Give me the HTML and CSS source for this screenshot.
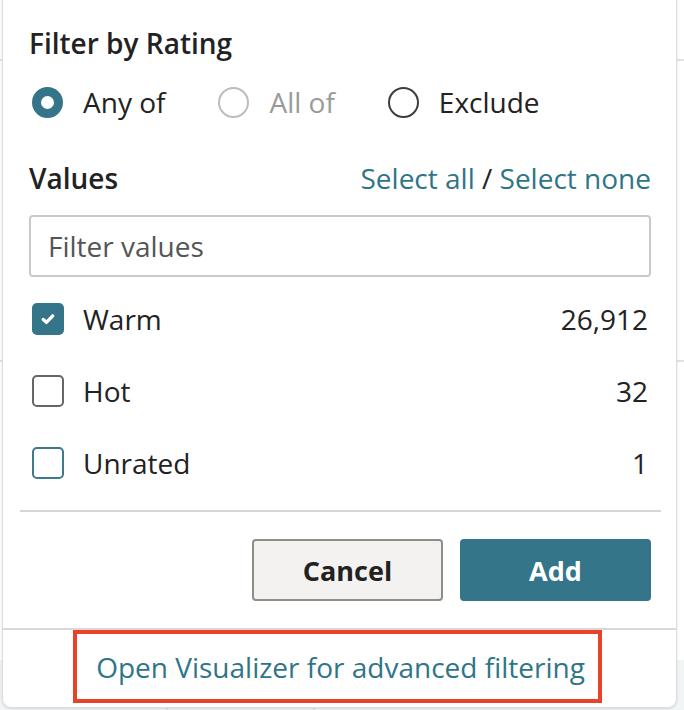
FILE: index.html
```html
<!DOCTYPE html>
<html>
<head>
<meta charset="utf-8">
<link rel="stylesheet" href="styles.css">
</head>
<body>
<div class="page">
  <div class="popover">
    <div class="content">
      <h2 class="title">Filter by Rating</h2>
      <div class="modes">
        <label class="mode"><span class="radio radio-on"></span><span>Any of</span></label>
        <label class="mode mode-disabled"><span class="radio radio-disabled"></span><span>All of</span></label>
        <label class="mode"><span class="radio"></span><span>Exclude</span></label>
      </div>
      <div class="values-head">
        <span class="values-title">Values</span>
        <span class="select-links"><a class="link">Select all</a> / <a class="link">Select none</a></span>
      </div>
      <div class="search"><span class="placeholder">Filter values</span></div>
      <ul class="options">
        <li class="option"><span class="check check-on"><svg viewBox="0 0 16 16" width="18" height="18"><path d="M3.8 8.4 L6.6 11 L12.2 5.2" fill="none" stroke="#fff" stroke-width="3" stroke-linecap="round" stroke-linejoin="round"/></svg></span><span class="opt-label">Warm</span><span class="count">26,912</span></li>
        <li class="option"><span class="check"></span><span class="opt-label">Hot</span><span class="count">32</span></li>
        <li class="option"><span class="check check-focus"></span><span class="opt-label">Unrated</span><span class="count">1</span></li>
      </ul>
    </div>
    <div class="divider"></div>
    <div class="actions">
      <button class="btn btn-cancel">Cancel</button>
      <button class="btn btn-add">Add</button>
    </div>
    <div class="footer">
      <a class="footer-link">Open Visualizer for advanced filtering</a>
    </div>
  </div>
</div>
</body>
</html>
```

FILE: styles.css
```css
* { box-sizing: border-box; }
html, body { margin: 0; padding: 0; }
body {
  font-family: "Open Sans", "Noto Sans", sans-serif;
  color: #222;
  background: #fff;
}
.page {
  position: relative;
  width: 684px;
  height: 710px;
  overflow: hidden;
  background:
    linear-gradient(#e2e2e2, #e2e2e2) 0 59px / 100% 2px no-repeat,
    linear-gradient(#e2e2e2, #e2e2e2) 0 360px / 100% 2px no-repeat,
    linear-gradient(#dfe3e5, #dfe3e5) 166px 700px / 2px 10px no-repeat,
    linear-gradient(#dfe3e5, #dfe3e5) 313px 700px / 2px 10px no-repeat,
    linear-gradient(#f2f5f6, #f2f5f6) 0 660px / 100% 50px no-repeat,
    #fff;
}
.popover {
  position: relative;
  margin: -12px 0 0 3px;
  width: 673px;
  height: 719px;
  background: #fff;
  border-radius: 8px;
  box-shadow: 0 0 0 1px #dedede, 0 1px 3px 1px rgba(0,0,0,0.12);
  display: flex;
  flex-direction: column;
}
.content {
  padding: 35px 25px 0 26px;
}
.title {
  margin: 0;
  height: 40px;
  line-height: 40px;
  font-size: 28px;
  font-weight: 600;
  color: #222;
}
.modes {
  display: flex;
  align-items: center;
  height: 78px;
  font-size: 28px;
}
.mode {
  display: flex;
  align-items: center;
  gap: 20px;
  margin-right: 50px;
}
.mode-disabled { color: #9a9a9a; }
.radio {
  width: 31px;
  height: 31px;
  border-radius: 50%;
  border: 2px solid #3d3d3d;
  margin-left: 3px;
  background: #fff;
}
.radio-on { border: 9px solid #347589; }
.radio-disabled { border-color: #bdbdbd; }
.values-head {
  display: flex;
  align-items: center;
  justify-content: space-between;
  height: 74px;
  font-size: 28px;
}
.values-title { font-weight: 600; }
.select-links { color: #222; }
.link { color: #2f7588; }
.search {
  height: 62px;
  border: 2px solid #c9c9c5;
  border-radius: 4px;
  display: flex;
  align-items: center;
  padding-left: 17px;
  font-size: 28px;
  color: #555;
}
.options {
  list-style: none;
  margin: 6px 0 0;
  padding: 0;
}
.option {
  display: flex;
  align-items: center;
  height: 72px;
  font-size: 28px;
}
.check {
  width: 32px;
  height: 32px;
  border: 2px solid #666;
  border-radius: 5px;
  margin-left: 3px;
  display: flex;
  align-items: center;
  justify-content: center;
}
.check-on { background: #347589; border-color: #347589; }
.check-focus { border-color: #3b7a8c; }
.opt-label { margin-left: 19px; flex: 1; }
.count { margin-right: 3px; }
.divider {
  margin: 11px 15px 0 17px;
  height: 2px;
  background: #d6d6d6;
}
.actions {
  display: flex;
  justify-content: flex-end;
  gap: 17px;
  padding: 27px 25px 0 0;
}
.btn {
  width: 191px;
  height: 62px;
  border-radius: 4px;
  font-family: "Open Sans", "Noto Sans", sans-serif;
  font-size: 27px;
  font-weight: 700;
}
.btn-cancel {
  background: #f3f2f1;
  border: 2px solid #8f8d88;
  color: #222;
}
.btn-add {
  background: #347589;
  border: none;
  color: #fff;
}
.footer {
  margin-top: 27px;
  border-top: 2px solid #d8d8d8;
  display: flex;
  justify-content: center;
}
.footer-link {
  display: flex;
  align-items: center;
  width: 529px;
  height: 73px;
  border: 4px solid #e8432a;
  justify-content: center;
  padding-left: 6px;
  font-size: 28px;
  color: #2f7588;
  margin-right: 4px;
}
```
